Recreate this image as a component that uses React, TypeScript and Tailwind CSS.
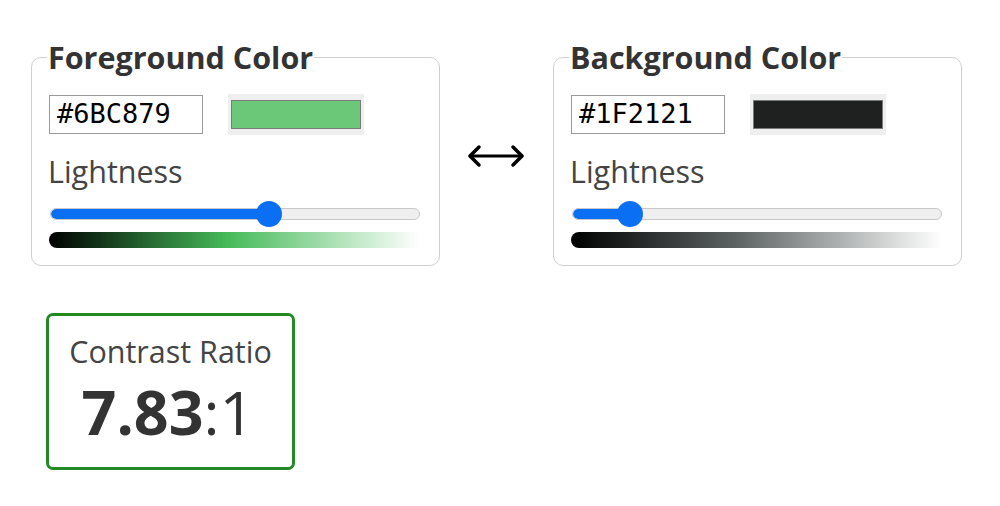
import React from "react";

const sans = { fontFamily: '"Open Sans", "Liberation Sans", sans-serif' };

type PanelProps = {
  title: string;
  hex: string;
  lightness: number;
  gradient: string;
};

const ColorPanel = ({ title, hex, lightness, gradient }: PanelProps) => {
  const pos = 13 + (344 * lightness) / 100;
  return (
    <fieldset className="w-[409px] h-[227px] border border-[#cfcfcf] rounded-[10px] pl-[17px] pr-[19px] pb-[17px] text-[#3d3d3d]">
      <legend className="text-[30.5px] font-bold leading-[36px] px-[1px] -ml-[2px] text-[#333]">{title}</legend>
      <div className="flex items-center gap-[25px] mt-[19px]">
        <input
          readOnly
          value={hex}
          className="w-[154px] h-[39px] border border-[#9a9a9a] px-[7px] text-[27px] text-black outline-none"
          style={{ fontFamily: '"DejaVu Sans Mono", "Liberation Mono", monospace' }}
        />
        <div className="w-[136px] h-[41px] bg-[#efefef] px-[3px] py-[6px]">
          <div className="w-full h-full border border-[#7a7a7a]" style={{ backgroundColor: hex }} />
        </div>
      </div>
      <div className="text-[30.5px] leading-[36px] mt-[18px] -ml-[1px] text-[#444]">Lightness</div>
      <div className="relative h-[26px] mt-[12px] ml-[1px] w-[370px] flex items-center">
        <div className="w-full h-[12px] rounded-full bg-[#efefef] border border-[#c8c8c8] overflow-hidden">
          <div className="h-full bg-[#0b6ff3] rounded-full" style={{ width: pos }} />
        </div>
        <div
          className="absolute top-0 w-[26px] h-[26px] rounded-full bg-[#0b6ff3]"
          style={{ left: pos - 13 }}
        />
      </div>
      <div className="h-[16px] w-[371px] mt-[5px] rounded-l-full" style={{ background: gradient }} />
    </fieldset>
  );
};

const App = () => {
  return (
    <div className="w-[1000px] h-[506px] bg-white overflow-hidden pt-[39px] pl-[31px]" style={sans}>
      <div className="flex items-start">
        <ColorPanel
          title="Foreground Color"
          hex="#6BC879"
          lightness={60}
          gradient="linear-gradient(to right, #000 0%, hsl(130 46% 50%) 48%, #fff 100%)"
        />
        <div className="w-[113px] flex justify-center pt-[105px] pr-[1px]">
          <svg width="58" height="24" viewBox="0 0 58 24" fill="none" stroke="#000" strokeWidth="3.5" strokeLinecap="round" strokeLinejoin="round">
            <path d="M3 12 H55" strokeWidth="3" />
            <path d="M12 3 L3 12 L12 21" />
            <path d="M46 3 L55 12 L46 21" />
          </svg>
        </div>
        <ColorPanel
          title="Background Color"
          hex="#1F2121"
          lightness={13}
          gradient="linear-gradient(to right, #000 0%, hsl(180 3% 38%) 45%, #fff 100%)"
        />
      </div>
      <div className="ml-[15px] mt-[47px] w-[249px] h-[157px] border-[3px] border-[#238a23] rounded-[7px] flex flex-col items-center pt-[17px]">
        <div className="text-[30.5px] leading-[36px] text-[#444]">Contrast Ratio</div>
        <div className="text-[61px] leading-[66px] text-[#333] mt-[10px] -ml-[5px]">
          <span className="font-bold">7.83</span>:1
        </div>
      </div>
    </div>
  );
};

export default App;
